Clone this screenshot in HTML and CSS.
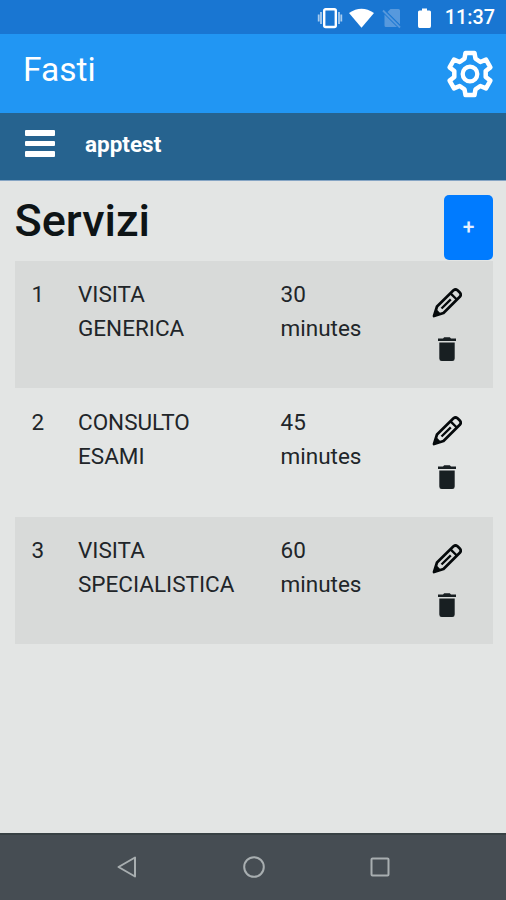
FILE: index.html
```html
<!DOCTYPE html>
<html lang="it">
<head>
<meta charset="utf-8">
<title>Fasti</title>
<link rel="stylesheet" href="styles.css">
</head>
<body>
<svg class="defs" width="0" height="0">
  <symbol id="pencil" viewBox="0 0 30 30">
    <path d="M2 28 5 18.5 21.5 2.3Q23.5.7 25.5 2.3L28 4.8Q29.6 6.8 27.8 8.8L11.5 25Z" fill="none" stroke="currentColor" stroke-width="2.7" stroke-linejoin="round"/>
    <path d="M1 29 3.8 20.5 9.4 26.2Z" fill="currentColor"/>
    <path d="M18.5 5.3 24.8 11.5M9.5 20.5 18.8 11.4" fill="none" stroke="currentColor" stroke-width="2.4"/>
  </symbol>
  <symbol id="trash" viewBox="0 0 20 25">
    <path d="M1 1.4H6L7.2.2H12.8L14 1.4H19V3.9H1ZM2.3 5.4H17.7V21.5Q17.7 24 15.3 24H4.7Q2.3 24 2.3 21.5Z" fill="currentColor"/>
  </symbol>
</svg>
<header class="status">
  <svg class="status-icons" width="122" height="24" viewBox="0 0 122 24" fill="#fff">
    <rect x="7.2" y="3.2" width="11.6" height="17.8" rx="1.5" fill="none" stroke="#fff" stroke-width="2.4"/>
    <path d="M4 6V18M22 6V18M1.700 8.500V15.500M24.300 8.500V15.500" stroke="#a9cdef" stroke-width="1.800"/>
    <path d="M32 7Q44.500-1.500 57 7L44.500 21.800Z"/>
    <path d="M73.500 3H81.500Q83 3 83 4.500V18.500L70.500 6ZM67.500 8.500 80 21H69Q67.500 21 67.500 19.500Z" fill="#5799dd"/>
    <path d="M66 4.500 83 21.500" stroke="#5799dd" stroke-width="1.800"/>
    <path d="M102.500 4.500H105V2.500H110V4.500H112.500Q114 4.500 114 6V20Q114 22 112.500 22H102.500Q101 22 101 20V6Q101 4.500 102.500 4.500Z"/>
  </svg>
  <time class="clock">11:37</time>
</header>
<div class="appbar">
  <span class="brand">Fasti</span>
  <svg class="gear" width="48" height="48" viewBox="-24 -24 48 48" fill="none" stroke="#fff">
    <path d="M-4.500-21H4.500L5.500-15.300 10.300-12 16-14.400 20.400-6.600 15.700-3V3L20.400 6.600 16 14.400 10.300 12 5.500 15.300 4.500 21H-4.500L-5.500 15.300-10.300 12-16 14.400-20.400 6.600-15.700 3V-3L-20.400-6.600-16-14.400-10.300-12-5.500-15.300Z" stroke-width="4.500" stroke-linejoin="round"/>
    <circle r="7.300" stroke-width="4.300"/>
  </svg>
</div>
<nav class="nav">
  <span class="burger"><i></i><i></i><i></i></span>
  <strong>apptest</strong>
</nav>
<main class="content">
  <div class="heading"><h1>Servizi</h1><button class="add">+</button></div>
  <section class="list">
    <div class="row"><span>1</span><span class="name">VISITA<br>GENERICA</span><span>30<br>minutes</span><div class="actions"><svg class="pencil"><use href="#pencil"/></svg><svg class="trash"><use href="#trash"/></svg></div></div>
    <div class="row"><span>2</span><span class="name">CONSULTO<br>ESAMI</span><span>45<br>minutes</span><div class="actions"><svg class="pencil"><use href="#pencil"/></svg><svg class="trash"><use href="#trash"/></svg></div></div>
    <div class="row"><span>3</span><span class="name">VISITA<br>SPECIALISTICA</span><span>60<br>minutes</span><div class="actions"><svg class="pencil"><use href="#pencil"/></svg><svg class="trash"><use href="#trash"/></svg></div></div>
  </section>
</main>
<footer class="system">
  <svg width="24" height="24" viewBox="0 0 24 24"><path d="M3.500 12 20 2.500V21.500Z"/></svg>
  <svg width="24" height="24" viewBox="0 0 24 24"><circle cx="12" cy="12" r="9.800"/></svg>
  <svg width="24" height="24" viewBox="0 0 24 24"><rect x="3.500" y="3.500" width="17" height="17" rx="1"/></svg>
</footer>
</body>
</html>
```

FILE: styles.css
```css
* { box-sizing: border-box; }
body {
  margin: 0;
  height: 900px;
  display: flex;
  flex-direction: column;
  overflow: hidden;
  background: #e3e5e4;
  color: #212529;
  font-family: Roboto, "Liberation Sans", sans-serif;
}
.defs { position: absolute; }
.status {
  height: 34px;
  flex: none;
  display: flex;
  justify-content: flex-end;
  align-items: center;
  gap: 6px;
  padding: 0 11px 0 0;
  background: #1976d2;
  color: #fff;
}
.status-icons { align-self: flex-start; margin-top: 6px; }
.clock { font-size: 19.8px; font-weight: 500; line-height: 34px; padding-top: 2px; }
.appbar {
  height: 79px;
  flex: none;
  display: flex;
  align-items: center;
  justify-content: space-between;
  padding: 0 12px 0 23px;
  background: #2196f3;
  color: #fff;
}
.brand { font-size: 33.5px; line-height: 40px; margin-top: -8px; }
.nav {
  height: 68px;
  flex: none;
  display: flex;
  align-items: center;
  gap: 30px;
  padding: 0 25px 6px;
  background: #26638f;
  border-bottom: 1px solid #86a5c4;
  color: #fff;
  font-size: 22.5px;
}
.burger { width: 30px; display: grid; gap: 5px; }
.burger i { height: 5.5px; border-radius: 1px; background: #fff; }
.content { flex: 1; padding: 14px 13px 0 14.5px; }
.heading { display: flex; justify-content: space-between; height: 66.4px; }
h1 { margin: -1px 0 0; font-size: 45px; font-weight: 500; line-height: 54px; color: #0e1416; }
.add {
  width: 49px;
  height: 64.5px;
  border: 0;
  border-radius: 5px;
  background: #007bff;
  color: #e4f1ff;
  font: 500 21px Roboto, sans-serif;
}
.row {
  height: 126.8px;
  margin-bottom: 1.2px;
  display: grid;
  grid-template-columns: 46.5px 202.5px 1fr 48.5px;
  padding: 17px 14px 0 17px;
  font-size: 22.5px;
  line-height: 33.75px;
}
.row:nth-child(odd) { background: #d8dad9; }
.actions { display: flex; flex-direction: column; align-items: center; padding-top: 10px; gap: 18.5px; width: 32px; color: #05090b; }
.pencil { width: 30px; height: 30px; }
.trash { width: 20px; height: 25px; color: #181f22; }
.system {
  height: 67px;
  flex: none;
  display: flex;
  justify-content: center;
  align-items: center;
  gap: 102.5px;
  padding: 0 0 2px 1px;
  background: #464d53;
  border-top: 2px solid #384144;
}
.system svg { fill: none; stroke: #a8aeb0; stroke-width: 2; stroke-linejoin: round; }
```
